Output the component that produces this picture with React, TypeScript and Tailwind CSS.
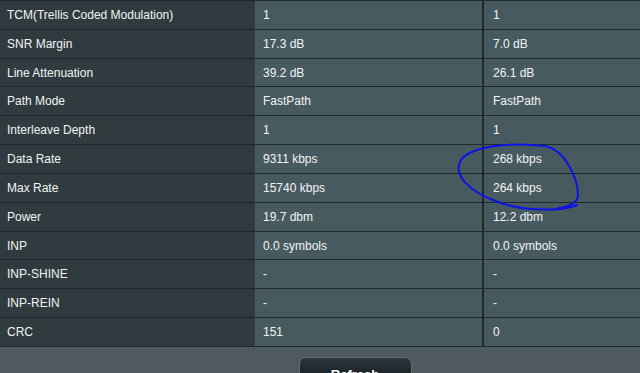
const rows: [string, string, string][] = [
  ["TCM(Trellis Coded Modulation)", "1", "1"],
  ["SNR Margin", "17.3 dB", "7.0 dB"],
  ["Line Attenuation", "39.2 dB", "26.1 dB"],
  ["Path Mode", "FastPath", "FastPath"],
  ["Interleave Depth", "1", "1"],
  ["Data Rate", "9311 kbps", "268 kbps"],
  ["Max Rate", "15740 kbps", "264 kbps"],
  ["Power", "19.7 dbm", "12.2 dbm"],
  ["INP", "0.0 symbols", "0.0 symbols"],
  ["INP-SHINE", "-", "-"],
  ["INP-REIN", "-", "-"],
  ["CRC", "151", "0"],
];

export default function App() {
  return (
    <div className="relative w-[640px] h-[373px] overflow-hidden bg-[#4e5a5f] font-['Liberation_Sans',Arial,sans-serif] text-[12px] text-[#f2f4f4]">
      <div className="flex flex-col border-t border-[#22292c]">
        {rows.map(([label, down, up]) => (
          <div
            key={label}
            className="flex h-[28.83px] border-b border-[#22292c]"
          >
            <div className="w-[255px] flex items-center pl-[7px] bg-[#2f3b3f]">
              {label}
            </div>
            <div className="w-[229px] flex items-center pl-[8px] bg-[#475a5f] border-r-2 border-[#22292c]">
              {down}
            </div>
            <div className="flex-1 flex items-center pl-[9px] bg-[#475a5f]">
              {up}
            </div>
          </div>
        ))}
      </div>

      <div className="flex justify-center pl-[70px] pt-[10px]">
        <button className="w-[113px] h-[30px] rounded-t-[7px] border border-[#5d6a6f] bg-gradient-to-b from-[#2a373b] to-[#10171a] text-white font-bold text-[13px] pt-[6px] leading-none text-center">
          Refresh
        </button>
      </div>

      {/* hand-drawn annotation */}
      <svg
        className="absolute left-0 top-0 pointer-events-none"
        width="640"
        height="373"
        viewBox="0 0 640 373"
      >
        <path
          d="M 577 205 C 560 212, 522 211, 498 202 C 470 192, 452 175, 461 160 C 471 146, 510 142, 545 146 C 566 150, 578 180, 578 195 C 578 203, 568 207, 558 208"
          fill="none"
          stroke="#0a14e6"
          strokeWidth="2"
          strokeLinecap="round"
        />
      </svg>
    </div>
  );
}
